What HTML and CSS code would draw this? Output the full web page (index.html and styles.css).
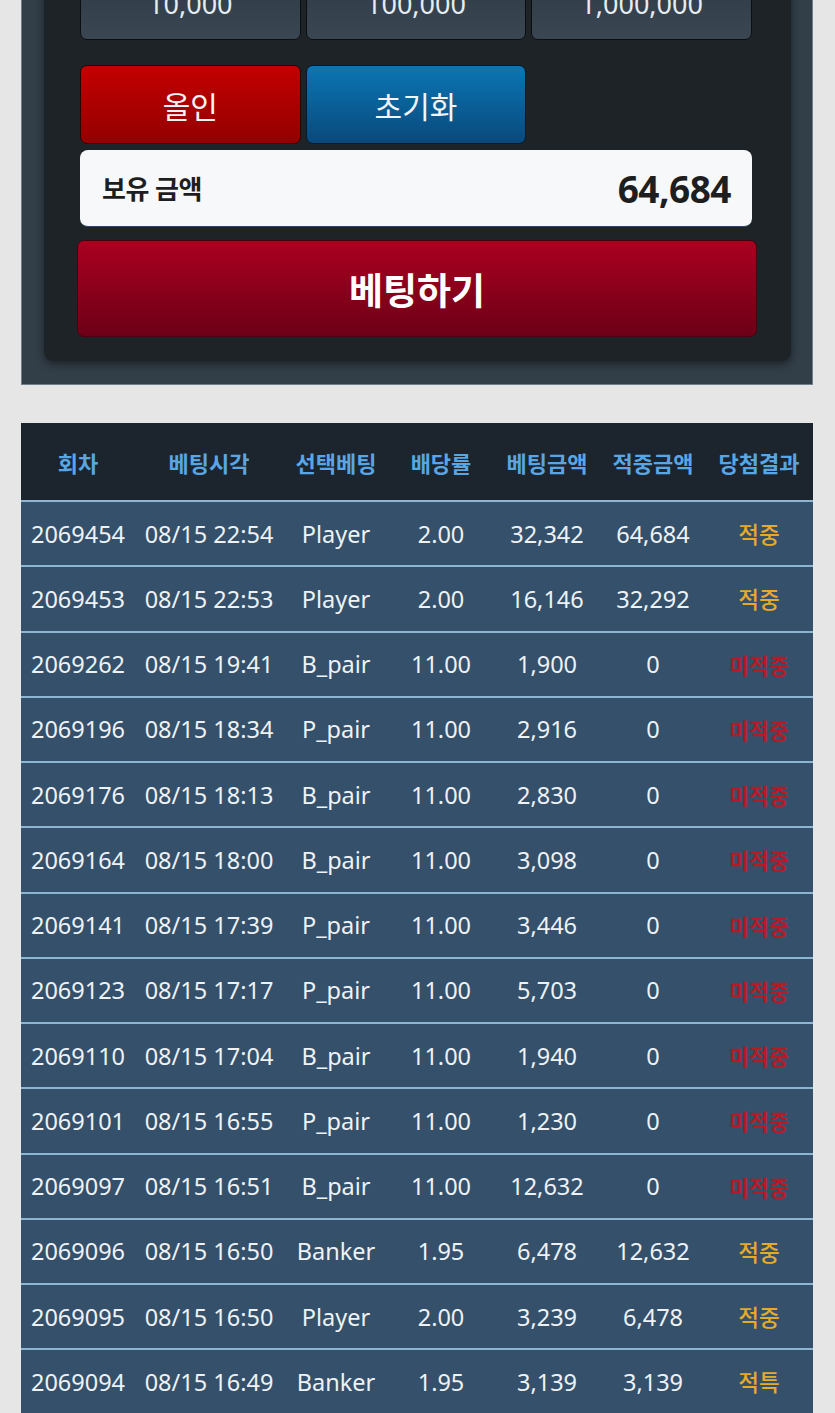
FILE: index.html
```html
<!DOCTYPE html>
<html lang="ko">
<head>
<meta charset="utf-8">
<title>베팅</title>
<link rel="stylesheet" href="styles.css">
</head>
<body>
<div class="page">
  <section class="game-panel">
    <div class="console">
      <div class="chips">
        <button class="chip">10,000</button>
        <button class="chip">100,000</button>
        <button class="chip">1,000,000</button>
      </div>
      <div class="actions">
        <button class="act act-allin">올인</button>
        <button class="act act-reset">초기화</button>
      </div>
      <div class="balance">
        <span class="balance-label">보유 금액</span>
        <span class="balance-value">64,684</span>
      </div>
      <button class="bet">베팅하기</button>
    </div>
  </section>

  <section class="history">
    <div class="row head">
      <span>회차</span><span>베팅시각</span><span>선택베팅</span><span>배당률</span><span>베팅금액</span><span>적중금액</span><span>당첨결과</span>
    </div>
    <div class="row"><span>2069454</span><span>08/15 22:54</span><span>Player</span><span>2.00</span><span>32,342</span><span>64,684</span><span class="win">적중</span></div>
    <div class="row"><span>2069453</span><span>08/15 22:53</span><span>Player</span><span>2.00</span><span>16,146</span><span>32,292</span><span class="win">적중</span></div>
    <div class="row"><span>2069262</span><span>08/15 19:41</span><span>B_pair</span><span>11.00</span><span>1,900</span><span>0</span><span class="lose">미적중</span></div>
    <div class="row"><span>2069196</span><span>08/15 18:34</span><span>P_pair</span><span>11.00</span><span>2,916</span><span>0</span><span class="lose">미적중</span></div>
    <div class="row"><span>2069176</span><span>08/15 18:13</span><span>B_pair</span><span>11.00</span><span>2,830</span><span>0</span><span class="lose">미적중</span></div>
    <div class="row"><span>2069164</span><span>08/15 18:00</span><span>B_pair</span><span>11.00</span><span>3,098</span><span>0</span><span class="lose">미적중</span></div>
    <div class="row"><span>2069141</span><span>08/15 17:39</span><span>P_pair</span><span>11.00</span><span>3,446</span><span>0</span><span class="lose">미적중</span></div>
    <div class="row"><span>2069123</span><span>08/15 17:17</span><span>P_pair</span><span>11.00</span><span>5,703</span><span>0</span><span class="lose">미적중</span></div>
    <div class="row"><span>2069110</span><span>08/15 17:04</span><span>B_pair</span><span>11.00</span><span>1,940</span><span>0</span><span class="lose">미적중</span></div>
    <div class="row"><span>2069101</span><span>08/15 16:55</span><span>P_pair</span><span>11.00</span><span>1,230</span><span>0</span><span class="lose">미적중</span></div>
    <div class="row"><span>2069097</span><span>08/15 16:51</span><span>B_pair</span><span>11.00</span><span>12,632</span><span>0</span><span class="lose">미적중</span></div>
    <div class="row"><span>2069096</span><span>08/15 16:50</span><span>Banker</span><span>1.95</span><span>6,478</span><span>12,632</span><span class="win">적중</span></div>
    <div class="row"><span>2069095</span><span>08/15 16:50</span><span>Player</span><span>2.00</span><span>3,239</span><span>6,478</span><span class="win">적중</span></div>
    <div class="row"><span>2069094</span><span>08/15 16:49</span><span>Banker</span><span>1.95</span><span>3,139</span><span>3,139</span><span class="win">적특</span></div>
  </section>
</div>
</body>
</html>
```

FILE: styles.css
```css
html, body {
  margin: 0;
  padding: 0;
  background: #e6e6e6;
}

body {
  font-family: "Noto Sans", "Noto Sans CJK KR", sans-serif;
  overflow: hidden;
}

.page {
  padding: 0 22px 0 21px;
  margin-top: -60px;
}

button {
  font-family: inherit;
  cursor: pointer;
}

/* ---------- top game panel ---------- */
.game-panel {
  width: 792px;
  box-sizing: border-box;
  background: #323e48;
  border: 1px solid #6f7f8c;
  border-top: none;
  padding: 0 21px 23px 22px;
}

.console {
  background: #1e2327;
  border-radius: 0 0 9px 9px;
  box-shadow: 0 3px 8px rgba(0, 0, 0, 0.45);
  padding: 21px 39px 24px 36px;
}

.chips {
  display: grid;
  grid-template-columns: repeat(3, 1fr);
  column-gap: 5px;
}

.chip {
  height: 79px;
  border: 1px solid #0c0f12;
  border-radius: 7px;
  background: linear-gradient(#2c3843, #3a4753);
  color: #e6ecf0;
  font-size: 27px;
  padding: 6px 0 0;
}

.actions {
  display: grid;
  grid-template-columns: repeat(3, 1fr);
  column-gap: 5px;
  margin-top: 25px;
}

.act {
  height: 79px;
  border-radius: 7px;
  color: #f4f4f4;
  font-size: 30px;
  font-weight: 400;
  padding: 0;
}

.act-allin {
  background: linear-gradient(#c30000, #930000);
  border: 1px solid #2a0303;
}

.act-reset {
  background: linear-gradient(#0b76b4, #09497c);
  border: 1px solid #061a2c;
}

.balance {
  margin-top: 6px;
  height: 77px;
  box-sizing: border-box;
  background: #f7f8f9;
  border-radius: 8px;
  border-bottom: 1px solid #2c4766;
  display: flex;
  align-items: center;
  justify-content: space-between;
  padding: 0 21px 0 22px;
  color: #1e1e1e;
}

.balance-label {
  font-size: 26px;
  font-weight: 700;
  letter-spacing: -0.5px;
}

.balance-value {
  font-size: 37px;
  font-weight: 700;
  letter-spacing: -0.5px;
}

.bet {
  display: block;
  width: calc(100% + 8px);
  margin: 13px 0 0 -3px;
  height: 97px;
  border-radius: 7px;
  border: 1px solid #4a0010;
  background: linear-gradient(#aa0020, #6c0016);
  color: #ffffff;
  font-size: 37px;
  font-weight: 700;
  padding: 0;
}

/* ---------- history table ---------- */
.history {
  width: 792px;
  margin-top: 38px;
  background: #34506a;
}

.row {
  display: grid;
  grid-template-columns: 114px 148px 106px 104px 108px 104px 108px;
  height: 65.25px;
  box-sizing: border-box;
  border-top: 2px solid #8db6d3;
  align-items: center;
  text-align: center;
  color: #eef2f5;
  font-size: 23.5px;
  background: #34506a;
  white-space: nowrap;
}

.row.head {
  height: 77px;
  border-top: none;
  background: #1c252d;
  color: #58a6e4;
  font-size: 22px;
  font-weight: 700;
}

.win {
  color: #e6aa2a;
  font-size: 22.5px;
  font-weight: 500;
}

.lose {
  color: #b51b27;
  font-size: 21.5px;
  font-weight: 700;
}
```
